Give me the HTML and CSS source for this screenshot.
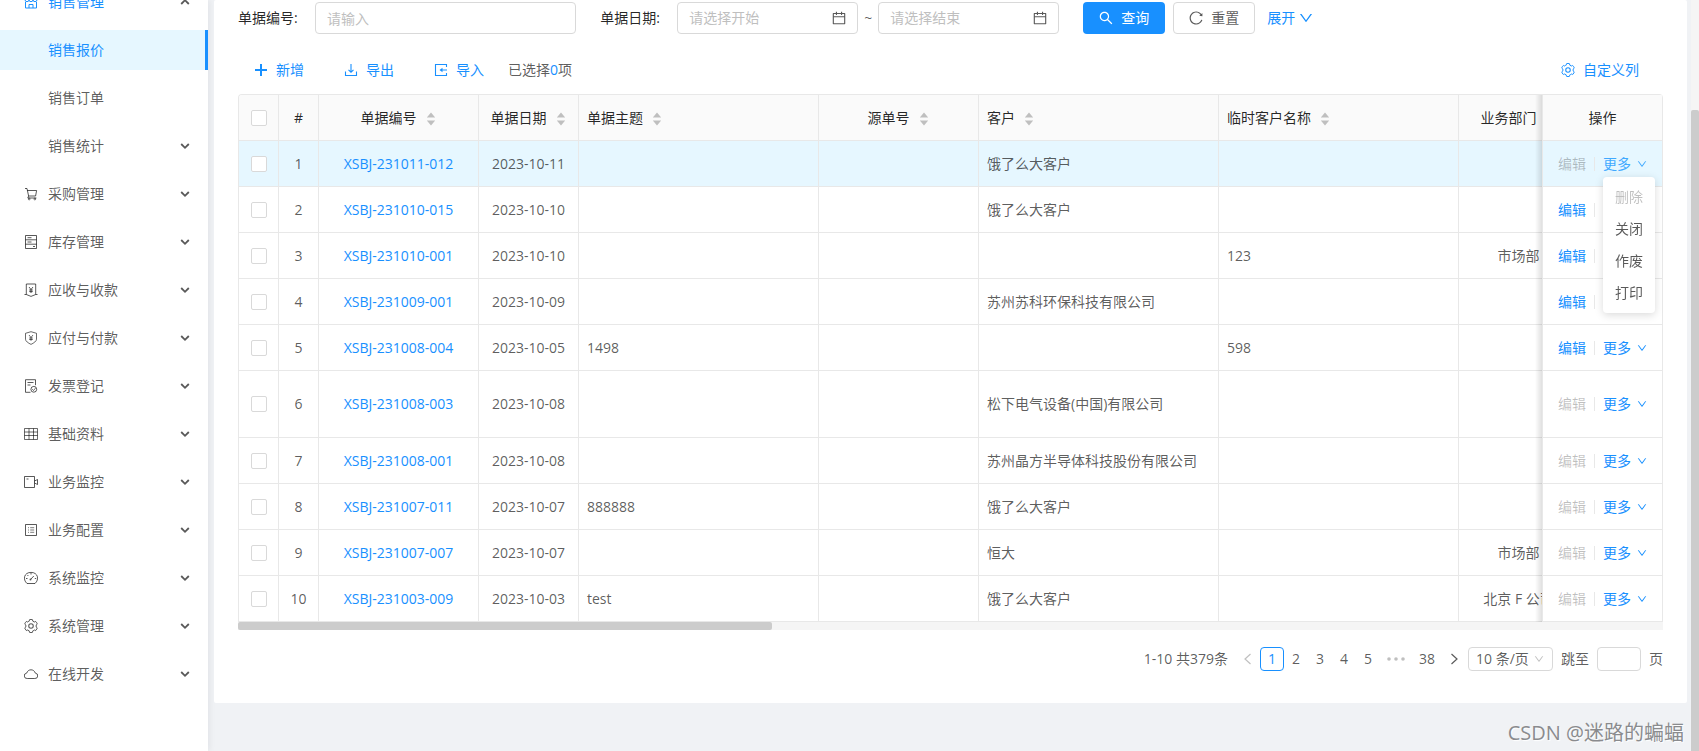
FILE: index.html
```html
<!DOCTYPE html>
<html lang="zh-CN">
<head>
<meta charset="utf-8">
<title>销售报价</title>
<link rel="stylesheet" href="styles.css">
</head>
<body>
<svg class="sprite" aria-hidden="true">
  <symbol id="i-down" viewBox="64 64 896 896"><path fill="currentColor" d="M884 256h-75c-5.1 0-9.9 2.5-12.9 6.6L512 654.2 227.9 262.6c-3-4.1-7.8-6.6-12.9-6.6h-75c-6.5 0-10.3 7.4-6.5 12.7l352.6 486.1c12.8 17.6 39 17.6 51.7 0l352.6-486.1c3.9-5.3.1-12.7-6.4-12.7z"/></symbol>
  <symbol id="i-chev" viewBox="0 0 10 10"><path d="M1.200 3L5 6.800 8.800 3" fill="none" stroke="currentColor" stroke-width="1.800"/></symbol>
  <symbol id="i-left" viewBox="0 0 12 12"><path d="M8.500 1L3 6l5.500 5" fill="none" stroke="currentColor" stroke-width="1.200"/></symbol>
  <symbol id="i-right" viewBox="0 0 12 12"><path d="M3.500 1L9 6l-5.500 5" fill="none" stroke="currentColor" stroke-width="1.200"/></symbol>
  <symbol id="i-dots" viewBox="0 0 20 4"><g fill="currentColor"><circle cx="3" cy="2" r="1.800"/><circle cx="10" cy="2" r="1.800"/><circle cx="17" cy="2" r="1.800"/></g></symbol>
  <symbol id="i-sort" viewBox="0 0 12 14"><path fill="currentColor" d="M6 .5L10.200 5.500H1.800zM6 13.500L10.200 8.500H1.800z"/></symbol>
  <symbol id="i-plus" viewBox="0 0 14 14"><path fill="currentColor" d="M6 1h2v5h5v2H8v5H6V8H1V6h5z"/></symbol>
  <symbol id="i-export" viewBox="0 0 14 14"><path d="M7 1v8M4.500 6.800L7 9.200l2.500-2.400M1.500 8.500v4h11v-4" fill="none" stroke="currentColor" stroke-width="1.100"/></symbol>
  <symbol id="i-import" viewBox="0 0 14 14"><path d="M12.500 4V1.500h-11v11h11V10M13 7H7" fill="none" stroke="currentColor" stroke-width="1.100"/><path d="M5.500 7l3-2.200v4.400z" fill="currentColor"/></symbol>
  <symbol id="i-search" viewBox="64 64 896 896"><path fill="currentColor" d="M909.6 854.5L649.9 594.8C690.2 542.7 712 479 712 412c0-80.2-31.3-155.4-87.9-212.1-56.6-56.7-132-87.9-212.1-87.9s-155.5 31.3-212.1 87.9C143.2 256.5 112 331.8 112 412c0 80.1 31.3 155.5 87.9 212.1C256.5 680.8 331.8 712 412 712c67 0 130.6-21.8 182.7-62l259.7 259.6a8.2 8.2 0 0 0 11.6 0l43.6-43.5a8.2 8.2 0 0 0 0-11.6zM570.4 570.4C528 612.7 471.8 636 412 636s-116-23.3-158.4-65.6C211.3 528 188 471.8 188 412s23.3-116.1 65.6-158.4C296 211.3 352.2 188 412 188s116.1 23.2 158.4 65.6S636 352.2 636 412s-23.3 116.1-65.6 158.4z"/></symbol>
  <symbol id="i-reload" viewBox="64 64 896 896"><path fill="currentColor" d="M909.1 209.3l-56.4 44.1C775.8 155.1 656.2 92 521.9 92 290 92 102.3 279.5 102 511.5 101.7 743.7 289.8 932 521.9 932c181.3 0 335.8-115 394.6-276.1 1.5-4.2-.7-8.9-4.9-10.3l-56.7-19.5a8 8 0 0 0-10.1 4.8c-1.8 5-3.8 10-5.9 14.9-17.3 41-42.1 77.8-73.7 109.4A344.77 344.77 0 0 1 655.9 829c-42.3 17.9-87.4 27-133.8 27-46.5 0-91.5-9.1-133.8-27A341.5 341.5 0 0 1 279 755.2a342.16 342.16 0 0 1-73.7-109.4c-17.9-42.4-27-87.4-27-133.9s9.1-91.5 27-133.9c17.3-41 42.1-77.8 73.7-109.4 31.6-31.6 68.4-56.4 109.3-73.8 42.3-17.9 87.4-27 133.8-27 46.5 0 91.5 9.1 133.8 27a341.5 341.5 0 0 1 109.3 73.8c9.9 9.9 19.2 20.4 27.8 31.4l-60.2 47a8 8 0 0 0 3 14.1l175.6 43c5 1.2 9.9-2.6 9.9-7.7l.8-180.9c-.1-6.6-7.8-10.3-13-6.2z"/></symbol>
  <symbol id="i-cal" viewBox="64 64 896 896"><path fill="currentColor" d="M880 184H712v-64c0-4.4-3.6-8-8-8h-56c-4.4 0-8 3.6-8 8v64H384v-64c0-4.4-3.6-8-8-8h-56c-4.4 0-8 3.6-8 8v64H144c-17.7 0-32 14.3-32 32v664c0 17.7 14.3 32 32 32h736c17.7 0 32-14.3 32-32V216c0-17.7-14.3-32-32-32zm-40 656H184V460h656v380zM184 392V256h128v48c0 4.4 3.6 8 8 8h56c4.4 0 8-3.6 8-8v-48h256v48c0 4.4 3.6 8 8 8h56c4.4 0 8-3.6 8-8v-48h128v136H184z"/></symbol>
  <symbol id="i-gear" viewBox="64 64 896 896"><g fill="none" stroke="currentColor" stroke-width="68"><path transform="translate(31 31) scale(.94)" d="M924.8 625.7l-65.5-56c3.1-19 4.7-38.4 4.7-57.8s-1.6-38.8-4.7-57.8l65.5-56a32.03 32.03 0 0 0 9.3-35.2l-.9-2.6a443.74 443.74 0 0 0-79.7-137.9l-1.8-2.1a32.12 32.12 0 0 0-35.1-9.5l-81.3 28.9c-30-24.6-63.5-44-99.7-57.6l-15.7-85a32.05 32.05 0 0 0-25.8-25.7l-2.7-.5c-52.1-9.4-106.9-9.4-159 0l-2.7.5a32.05 32.05 0 0 0-25.8 25.7l-15.8 85.4a351.86 351.86 0 0 0-99 57.4l-81.9-29.1a32 32 0 0 0-35.1 9.5l-1.8 2.1a446.02 446.02 0 0 0-79.7 137.9l-.9 2.6c-4.5 12.5-.8 26.5 9.3 35.2l66.3 56.6c-3.1 18.8-4.6 38-4.6 57.1 0 19.2 1.5 38.4 4.6 57.1L99 625.5a32.03 32.03 0 0 0-9.3 35.2l.9 2.6c18.1 50.4 44.9 96.9 79.7 137.9l1.8 2.1a32.12 32.12 0 0 0 35.1 9.5l81.9-29.1c29.8 24.5 63.1 43.9 99 57.4l15.8 85.4a32.05 32.05 0 0 0 25.8 25.7l2.7.5a449.4 449.4 0 0 0 159 0l2.7-.5a32.05 32.05 0 0 0 25.8-25.7l15.7-85a350 350 0 0 0 99.7-57.6l81.3 28.9a32 32 0 0 0 35.1-9.5l1.8-2.1c34.8-41.1 61.6-87.5 79.7-137.9l.9-2.6c4.5-12.3.8-26.3-9.3-35z"/><circle cx="512" cy="512" r="145"/></g></symbol>
  <symbol id="i-shop" viewBox="0 0 14 14"><path d="M1.500 7v6h11V7M1 1.500h12v3.200a2 2 0 0 1-4 0 2 2 0 0 1-4 0 2 2 0 0 1-4 0zM5 13V9.500h4V13M1 4.500h12" fill="none" stroke="currentColor"/></symbol>
  <symbol id="i-cart" viewBox="0 0 14 14"><path d="M1 1.500h2l1.600 7.500h7M3.300 3.500h9.300L11.600 9M4.600 9l-.8 2h8.600" fill="none" stroke="currentColor"/><circle cx="5.200" cy="12" r=".9" fill="none" stroke="currentColor" stroke-width=".8"/><circle cx="10.800" cy="12" r=".9" fill="none" stroke="currentColor" stroke-width=".8"/></symbol>
  <symbol id="i-db" viewBox="0 0 14 14"><path d="M1.500.5h11v13h-11zM1.500 4.800h11M1.500 9.200h11M3.500 2.700h4M3.500 7h4" fill="none" stroke="currentColor"/><path d="M9 11h2v1H9z" fill="currentColor"/></symbol>
  <symbol id="i-collect" viewBox="0 0 14 14"><path d="M.5 11.500h1.800V1h9.400v10.500h1.800M2.300 11.500L7 13.400l4.700-1.900M5 4l2 2.500L9 4M7 6.500V10M5.200 7h3.600M5.200 8.600h3.600" fill="none" stroke="currentColor"/></symbol>
  <symbol id="i-shield" viewBox="0 0 14 14"><path d="M7 .7l5.500 1.600v5.900c0 2-2.500 3.700-5.500 5.200-3-1.500-5.500-3.200-5.500-5.200V2.300zM5 4l2 2.500L9 4M7 6.500v3.300M5.200 7h3.600M5.200 8.500h3.600" fill="none" stroke="currentColor" stroke-width=".9"/></symbol>
  <symbol id="i-audit" viewBox="0 0 14 14"><path d="M6.500 13.300h-5V.7h10v5.500M3.500 3.500h6M3.500 6h3" fill="none" stroke="currentColor"/><circle cx="9.800" cy="10.300" r="2.900" fill="none" stroke="currentColor"/><path d="M8.200 10.200l1.300 1.300 2-2.400" fill="none" stroke="currentColor" stroke-width=".9"/></symbol>
  <symbol id="i-table" viewBox="0 0 14 14"><path d="M.5 1.500h13v11H.5zM.5 5h13M.5 8.500h13M5 1.500v11M9.500 1.500v11" fill="none" stroke="currentColor" stroke-width=".9"/></symbol>
  <symbol id="i-video" viewBox="0 0 14 14"><path d="M.5 1.500h10v11H.5zM10.500 6l3-1.500v5l-3-1.500M2.500 4h2" fill="none" stroke="currentColor"/></symbol>
  <symbol id="i-profile" viewBox="0 0 14 14"><path d="M1.500 1.500h11v11h-11z" fill="none" stroke="currentColor"/><path d="M6.200 4.700h4M6.200 7h4M6.200 9.300h4M4 4.700h1M4 7h1M4 9.300h1" fill="none" stroke="currentColor" stroke-width=".8"/></symbol>
  <symbol id="i-dash" viewBox="0 0 14 14"><path d="M3 12.500C-1.500 8.500 0 1.400 7 1.400s8.500 7.100 4 11.100zM6.800 8.200l3-3.200M7 2v1.500M2 7.500h1.500M10.800 7.500h1.400M3.400 4l1 1" fill="none" stroke="currentColor"/><circle cx="6.500" cy="8.500" r="1" fill="currentColor"/></symbol>
  <symbol id="i-cloud" viewBox="0 0 14 14"><path d="M3.300 11.500a2.700 2.700 0 0 1-.6-5.400C3.400 4 5 2.800 7 2.800S10.600 4 11.300 6.100a2.700 2.700 0 0 1-.6 5.400z" fill="none" stroke="currentColor"/></symbol>
</svg>

<div class="app">
  <nav class="side" aria-label="主菜单">
    <ul class="menu">
      <li><a class="item open" href="#"><svg class="ico"><use href="#i-shop"/></svg><span>销售管理</span><svg class="arrow up"><use href="#i-chev"/></svg></a></li>
      <li><a class="item sub active" href="#"><span>销售报价</span></a></li>
      <li><a class="item sub" href="#"><span>销售订单</span></a></li>
      <li><a class="item sub" href="#"><span>销售统计</span><svg class="arrow"><use href="#i-chev"/></svg></a></li>
      <li><a class="item" href="#"><svg class="ico"><use href="#i-cart"/></svg><span>采购管理</span><svg class="arrow"><use href="#i-chev"/></svg></a></li>
      <li><a class="item" href="#"><svg class="ico"><use href="#i-db"/></svg><span>库存管理</span><svg class="arrow"><use href="#i-chev"/></svg></a></li>
      <li><a class="item" href="#"><svg class="ico"><use href="#i-collect"/></svg><span>应收与收款</span><svg class="arrow"><use href="#i-chev"/></svg></a></li>
      <li><a class="item" href="#"><svg class="ico"><use href="#i-shield"/></svg><span>应付与付款</span><svg class="arrow"><use href="#i-chev"/></svg></a></li>
      <li><a class="item" href="#"><svg class="ico"><use href="#i-audit"/></svg><span>发票登记</span><svg class="arrow"><use href="#i-chev"/></svg></a></li>
      <li><a class="item" href="#"><svg class="ico"><use href="#i-table"/></svg><span>基础资料</span><svg class="arrow"><use href="#i-chev"/></svg></a></li>
      <li><a class="item" href="#"><svg class="ico"><use href="#i-video"/></svg><span>业务监控</span><svg class="arrow"><use href="#i-chev"/></svg></a></li>
      <li><a class="item" href="#"><svg class="ico"><use href="#i-profile"/></svg><span>业务配置</span><svg class="arrow"><use href="#i-chev"/></svg></a></li>
      <li><a class="item" href="#"><svg class="ico"><use href="#i-dash"/></svg><span>系统监控</span><svg class="arrow"><use href="#i-chev"/></svg></a></li>
      <li><a class="item" href="#"><svg class="ico"><use href="#i-gear"/></svg><span>系统管理</span><svg class="arrow"><use href="#i-chev"/></svg></a></li>
      <li><a class="item" href="#"><svg class="ico"><use href="#i-cloud"/></svg><span>在线开发</span><svg class="arrow"><use href="#i-chev"/></svg></a></li>
    </ul>
  </nav>

  <main class="main">
    <section class="card">
      <form class="filters">
        <div class="field field-no">
          <label for="no">单据编号:</label>
          <input class="box" id="no" type="text" placeholder="请输入">
        </div>
        <div class="field field-date">
          <label for="from">单据日期:</label>
          <div class="date box"><input id="from" type="text" placeholder="请选择开始"><svg class="ico"><use href="#i-cal"/></svg></div>
          <span class="tilde">~</span>
          <div class="date box"><input id="to" type="text" placeholder="请选择结束" aria-label="结束日期"><svg class="ico"><use href="#i-cal"/></svg></div>
        </div>
        <div class="buttons">
          <button class="btn primary" type="button"><svg class="ico"><use href="#i-search"/></svg>查询</button>
          <button class="btn plain" type="button"><svg class="ico"><use href="#i-reload"/></svg>重置</button>
          <a class="expand" href="#">展开<svg class="ico"><use href="#i-down"/></svg></a>
        </div>
      </form>

      <div class="toolbar">
        <button class="btn text" type="button"><svg class="ico"><use href="#i-plus"/></svg>新增</button>
        <button class="btn text" type="button"><svg class="ico"><use href="#i-export"/></svg>导出</button>
        <button class="btn text" type="button"><svg class="ico"><use href="#i-import"/></svg>导入</button>
        <span>已选择<b class="count">0</b>项</span>
        <button class="btn text columns" type="button"><svg class="ico"><use href="#i-gear"/></svg>自定义列</button>
      </div>

      <div class="grid">
        <div class="scroller">
          <table class="table">
            <colgroup><col class="w40"><col class="w40"><col class="w160"><col class="w100"><col class="w240"><col class="w160"><col class="w240"><col class="w240"><col class="w120"><col><col class="w-ops"></colgroup>
            <thead>
              <tr>
                <th><input type="checkbox" aria-label="全选"></th><th>#</th>
                <th>单据编号<svg class="sort"><use href="#i-sort"/></svg></th>
                <th>单据日期<svg class="sort"><use href="#i-sort"/></svg></th>
                <th class="l">单据主题<svg class="sort"><use href="#i-sort"/></svg></th>
                <th>源单号<svg class="sort"><use href="#i-sort"/></svg></th>
                <th class="l">客户<svg class="sort"><use href="#i-sort"/></svg></th>
                <th class="l">临时客户名称<svg class="sort"><use href="#i-sort"/></svg></th>
                <th>业务部门<svg class="sort"><use href="#i-sort"/></svg></th>
                <th></th><th class="fix">操作</th>
              </tr>
            </thead>
            <tbody>
              <tr class="hover"><td><input type="checkbox" aria-label="选择第1行"></td><td>1</td><td><a href="#">XSBJ-231011-012</a></td><td>2023-10-11</td><td class="l"></td><td></td><td class="l">饿了么大客户</td><td class="l"></td><td></td><td></td><td class="fix"><div class="ops"><button type="button" disabled>编辑</button><i></i><button class="more" type="button">更多<svg><use href="#i-down"/></svg></button></div></td></tr>
              <tr><td><input type="checkbox" aria-label="选择第2行"></td><td>2</td><td><a href="#">XSBJ-231010-015</a></td><td>2023-10-10</td><td class="l"></td><td></td><td class="l">饿了么大客户</td><td class="l"></td><td></td><td></td><td class="fix"><div class="ops"><button type="button">编辑</button><i></i></div></td></tr>
              <tr><td><input type="checkbox" aria-label="选择第3行"></td><td>3</td><td><a href="#">XSBJ-231010-001</a></td><td>2023-10-10</td><td class="l"></td><td></td><td class="l"></td><td class="l">123</td><td>市场部</td><td></td><td class="fix"><div class="ops"><button type="button">编辑</button><i></i></div></td></tr>
              <tr><td><input type="checkbox" aria-label="选择第4行"></td><td>4</td><td><a href="#">XSBJ-231009-001</a></td><td>2023-10-09</td><td class="l"></td><td></td><td class="l">苏州苏科环保科技有限公司</td><td class="l"></td><td></td><td></td><td class="fix"><div class="ops"><button type="button">编辑</button><i></i></div></td></tr>
              <tr><td><input type="checkbox" aria-label="选择第5行"></td><td>5</td><td><a href="#">XSBJ-231008-004</a></td><td>2023-10-05</td><td class="l">1498</td><td></td><td class="l"></td><td class="l">598</td><td></td><td></td><td class="fix"><div class="ops"><button type="button">编辑</button><i></i><button class="more" type="button">更多<svg><use href="#i-down"/></svg></button></div></td></tr>
              <tr class="tall"><td><input type="checkbox" aria-label="选择第6行"></td><td>6</td><td><a href="#">XSBJ-231008-003</a></td><td>2023-10-08</td><td class="l"></td><td></td><td class="l">松下电气设备(中国)有限公司</td><td class="l"></td><td></td><td></td><td class="fix"><div class="ops"><button type="button" disabled>编辑</button><i></i><button class="more" type="button">更多<svg><use href="#i-down"/></svg></button></div></td></tr>
              <tr><td><input type="checkbox" aria-label="选择第7行"></td><td>7</td><td><a href="#">XSBJ-231008-001</a></td><td>2023-10-08</td><td class="l"></td><td></td><td class="l">苏州晶方半导体科技股份有限公司</td><td class="l"></td><td></td><td></td><td class="fix"><div class="ops"><button type="button" disabled>编辑</button><i></i><button class="more" type="button">更多<svg><use href="#i-down"/></svg></button></div></td></tr>
              <tr><td><input type="checkbox" aria-label="选择第8行"></td><td>8</td><td><a href="#">XSBJ-231007-011</a></td><td>2023-10-07</td><td class="l">888888</td><td></td><td class="l">饿了么大客户</td><td class="l"></td><td></td><td></td><td class="fix"><div class="ops"><button type="button" disabled>编辑</button><i></i><button class="more" type="button">更多<svg><use href="#i-down"/></svg></button></div></td></tr>
              <tr><td><input type="checkbox" aria-label="选择第9行"></td><td>9</td><td><a href="#">XSBJ-231007-007</a></td><td>2023-10-07</td><td class="l"></td><td></td><td class="l">恒大</td><td class="l"></td><td>市场部</td><td></td><td class="fix"><div class="ops"><button type="button" disabled>编辑</button><i></i><button class="more" type="button">更多<svg><use href="#i-down"/></svg></button></div></td></tr>
              <tr><td><input type="checkbox" aria-label="选择第10行"></td><td>10</td><td><a href="#">XSBJ-231003-009</a></td><td>2023-10-03</td><td class="l">test</td><td></td><td class="l">饿了么大客户</td><td class="l"></td><td>北京 F 公司</td><td></td><td class="fix"><div class="ops"><button type="button" disabled>编辑</button><i></i><button class="more" type="button">更多<svg><use href="#i-down"/></svg></button></div></td></tr>
            </tbody>
          </table>
        </div>
        <div class="hbar"><div class="hthumb"></div></div>
        <div class="dropdown" role="menu">
          <button type="button" role="menuitem" disabled>删除</button>
          <button type="button" role="menuitem">关闭</button>
          <button type="button" role="menuitem">作废</button>
          <button type="button" role="menuitem">打印</button>
        </div>
      </div>

      <div class="pager">
        <span class="total">1-10 共379条</span>
        <button type="button" disabled aria-label="上一页"><svg><use href="#i-left"/></svg></button>
        <button class="current" type="button">1</button>
        <button type="button">2</button>
        <button type="button">3</button>
        <button type="button">4</button>
        <button type="button">5</button>
        <span class="dots"><svg><use href="#i-dots"/></svg></span>
        <button class="wide" type="button">38</button>
        <button type="button" aria-label="下一页"><svg><use href="#i-right"/></svg></button>
        <div class="size"><select aria-label="每页条数"><option>10 条/页</option></select><svg><use href="#i-down"/></svg></div>
        <label for="jump">跳至</label><input id="jump" type="text"><span>页</span>
      </div>
    </section>
  </main>
  <div class="vbar"><div class="vthumb"></div></div>
</div>
<div class="watermark">CSDN @迷路的蝙蝠</div>
</body>
</html>
```

FILE: styles.css
```css
* { box-sizing: border-box; }

body {
  margin: 0;
  height: 100vh;
  overflow: hidden;
  background: #f0f2f5;
  color: rgba(0, 0, 0, .65);
  font: 400 14px/22px "Open Sans", "Noto Sans CJK SC", sans-serif;
}

button, input, select { font: inherit; color: inherit; }
button { border: 0; padding: 0; background: none; cursor: pointer; }
a { color: #1890ff; text-decoration: none; }
svg { display: block; flex: none; }
.sprite { position: absolute; width: 0; height: 0; }
.ico { width: 14px; height: 14px; }

.app { display: flex; height: 100vh; }

/* side menu */
.side {
  flex: 0 0 208px;
  background: #fff;
  box-shadow: 2px 0 6px rgba(0, 21, 41, .06);
}
.menu {
  display: flex;
  flex-direction: column;
  gap: 8px;
  margin: -18px 0 0;
  padding: 0;
  list-style: none;
}
.item {
  display: flex;
  align-items: center;
  gap: 10px;
  height: 40px;
  padding: 0 18px 0 24px;
  color: rgba(0, 0, 0, .65);
}
.item.sub { padding-left: 48px; }
.item.open > span, .item.open .ico { color: #1890ff; }
.item.active {
  color: #1890ff;
  background: #e6f7ff;
  border-right: 3px solid #1890ff;
}
.arrow { width: 10px; height: 10px; margin-left: auto; }
.arrow.up { transform: rotate(180deg); }

/* content */
.main { flex: 1; min-width: 0; padding: 0 4px 0 6px; }
.card { background: #fff; padding: 2px 24px 32px; border-radius: 2px; }

.filters { display: flex; gap: 24px; height: 32px; }
.field { display: flex; align-items: center; min-width: 0; }
.field label { flex: 0 0 77px; color: rgba(0, 0, 0, .85); }
.field-no { flex: 0 0 calc((100% + 24px) / 4 - 24px); }
.field-date { flex: 0 0 calc((100% + 24px) / 3 - 24px); }
.box {
  flex: 1;
  min-width: 0;
  height: 32px;
  padding: 0 11px;
  border: 1px solid #d9d9d9;
  border-radius: 4px;
  background: #fff;
}
.date { display: flex; align-items: center; }
.date input { flex: 1; min-width: 0; border: 0; padding: 0; outline: 0; background: none; }
::placeholder { color: #bfbfbf; opacity: 1; }
.tilde { flex: 0 0 20px; text-align: center; }

.buttons { display: flex; align-items: center; gap: 8px; }
.btn {
  display: flex;
  align-items: center;
  gap: 8px;
  height: 32px;
  padding: 0 15px;
  border: 1px solid transparent;
  border-radius: 4px;
}
.primary { background: #1890ff; color: #fff; }
.plain { border-color: #d9d9d9; background: #fff; }
.text { color: #1890ff; }
.expand { display: flex; align-items: center; gap: 4px; margin-left: 4px; }

.toolbar { display: flex; align-items: center; gap: 8px; padding: 20px 8px 8px 0; }
.count { color: #1890ff; font-weight: 400; }
.columns { margin-left: auto; }

/* table */
.grid { position: relative; }
.scroller {
  overflow: hidden;
  border: 1px solid #e8e8e8;
  border-width: 1px 0 0 1px;
  border-radius: 4px 4px 0 0;
}
.table { width: 3803px; table-layout: fixed; border-collapse: separate; border-spacing: 0; }
.w40 { width: 40px; }
.w100 { width: 100px; }
.w120 { width: 120px; }
.w160 { width: 160px; }
.w240 { width: 240px; }
.w-ops { width: 121px; }
th, td {
  height: 46px;
  padding: 0 8px;
  border: 1px solid #e8e8e8;
  border-width: 0 1px 1px 0;
  text-align: center;
  font-weight: 400;
  white-space: nowrap;
  background: #fff;
}
th { background: #fafafa; color: rgba(0, 0, 0, .85); }
.l { text-align: left; }
.tall td { height: 67px; }
.hover td { background: #e6f7ff; }
.sort { display: inline-block; width: 12px; height: 14px; margin-left: 8px; vertical-align: -3px; color: #bfbfbf; }
.fix { position: sticky; right: 0; border-left-width: 1px; }
.fix::before {
  content: "";
  position: absolute;
  top: 0;
  bottom: -1px;
  left: -8px;
  width: 7px;
  background: linear-gradient(to right, rgba(0, 0, 0, 0), rgba(0, 0, 0, .12));
}
.ops { display: flex; align-items: center; padding-left: 7px; }
.ops i { width: 1px; height: 14px; margin: 0 8px; background: #e8e8e8; }
.ops button { color: #1890ff; }
.ops button:disabled { color: rgba(0, 0, 0, .25); }
.more { display: flex; align-items: center; gap: 6px; }
.more svg { width: 10px; height: 10px; }
.hover .more { color: #40a9ff; }

input[type="checkbox"] {
  appearance: none;
  display: block;
  width: 16px;
  height: 16px;
  margin: 0 auto;
  border: 1px solid #d9d9d9;
  border-radius: 2px;
  background: #fff;
}

.hbar { height: 8px; background: #f5f5f5; }
.hthumb { width: 37.5%; height: 8px; background: #ccc; border-radius: 2px; }

.dropdown {
  position: absolute;
  top: 83px;
  right: 8px;
  display: flex;
  flex-direction: column;
  padding: 4px 0;
  background: #fff;
  border-radius: 4px;
  box-shadow: 0 2px 8px rgba(0, 0, 0, .15);
}
.dropdown button { height: 32px; padding: 0 12px; }
.dropdown button:disabled { color: rgba(0, 0, 0, .25); }

/* pagination */
.pager { display: flex; align-items: center; justify-content: flex-end; padding-top: 17px; }
.total { margin-right: 8px; }
.pager button { display: flex; align-items: center; justify-content: center; width: 24px; height: 24px; }
.pager button svg { width: 12px; height: 12px; }
.pager button:disabled { color: rgba(0, 0, 0, .25); }
.pager .wide { width: 30px; }
.pager .current { border: 1px solid #1890ff; border-radius: 4px; color: #1890ff; }
.dots { padding: 0 6px; color: rgba(0, 0, 0, .25); }
.dots svg { width: 20px; height: 4px; }
.size { position: relative; margin: 0 8px 0 2px; }
.size select {
  appearance: none;
  display: block;
  width: 85px;
  height: 24px;
  padding: 0 7px;
  border: 1px solid #d9d9d9;
  border-radius: 4px;
  background: #fff;
}
.size svg { position: absolute; top: 7px; right: 9px; width: 10px; height: 10px; color: rgba(0, 0, 0, .25); }
#jump { width: 44px; height: 24px; margin: 0 8px; padding: 0 7px; border: 1px solid #d9d9d9; border-radius: 4px; }

.vbar { flex: 0 0 8px; padding-top: 110px; background: #f5f5f5; }
.vthumb { height: 100%; background: #ccc; border-radius: 2px 2px 0 0; }

.watermark {
  position: absolute;
  right: 15px;
  bottom: 4px;
  font-size: 20px;
  line-height: 28px;
  color: #8a8b8e;
  text-shadow: 1px 1px 1px #fff;
}
```
